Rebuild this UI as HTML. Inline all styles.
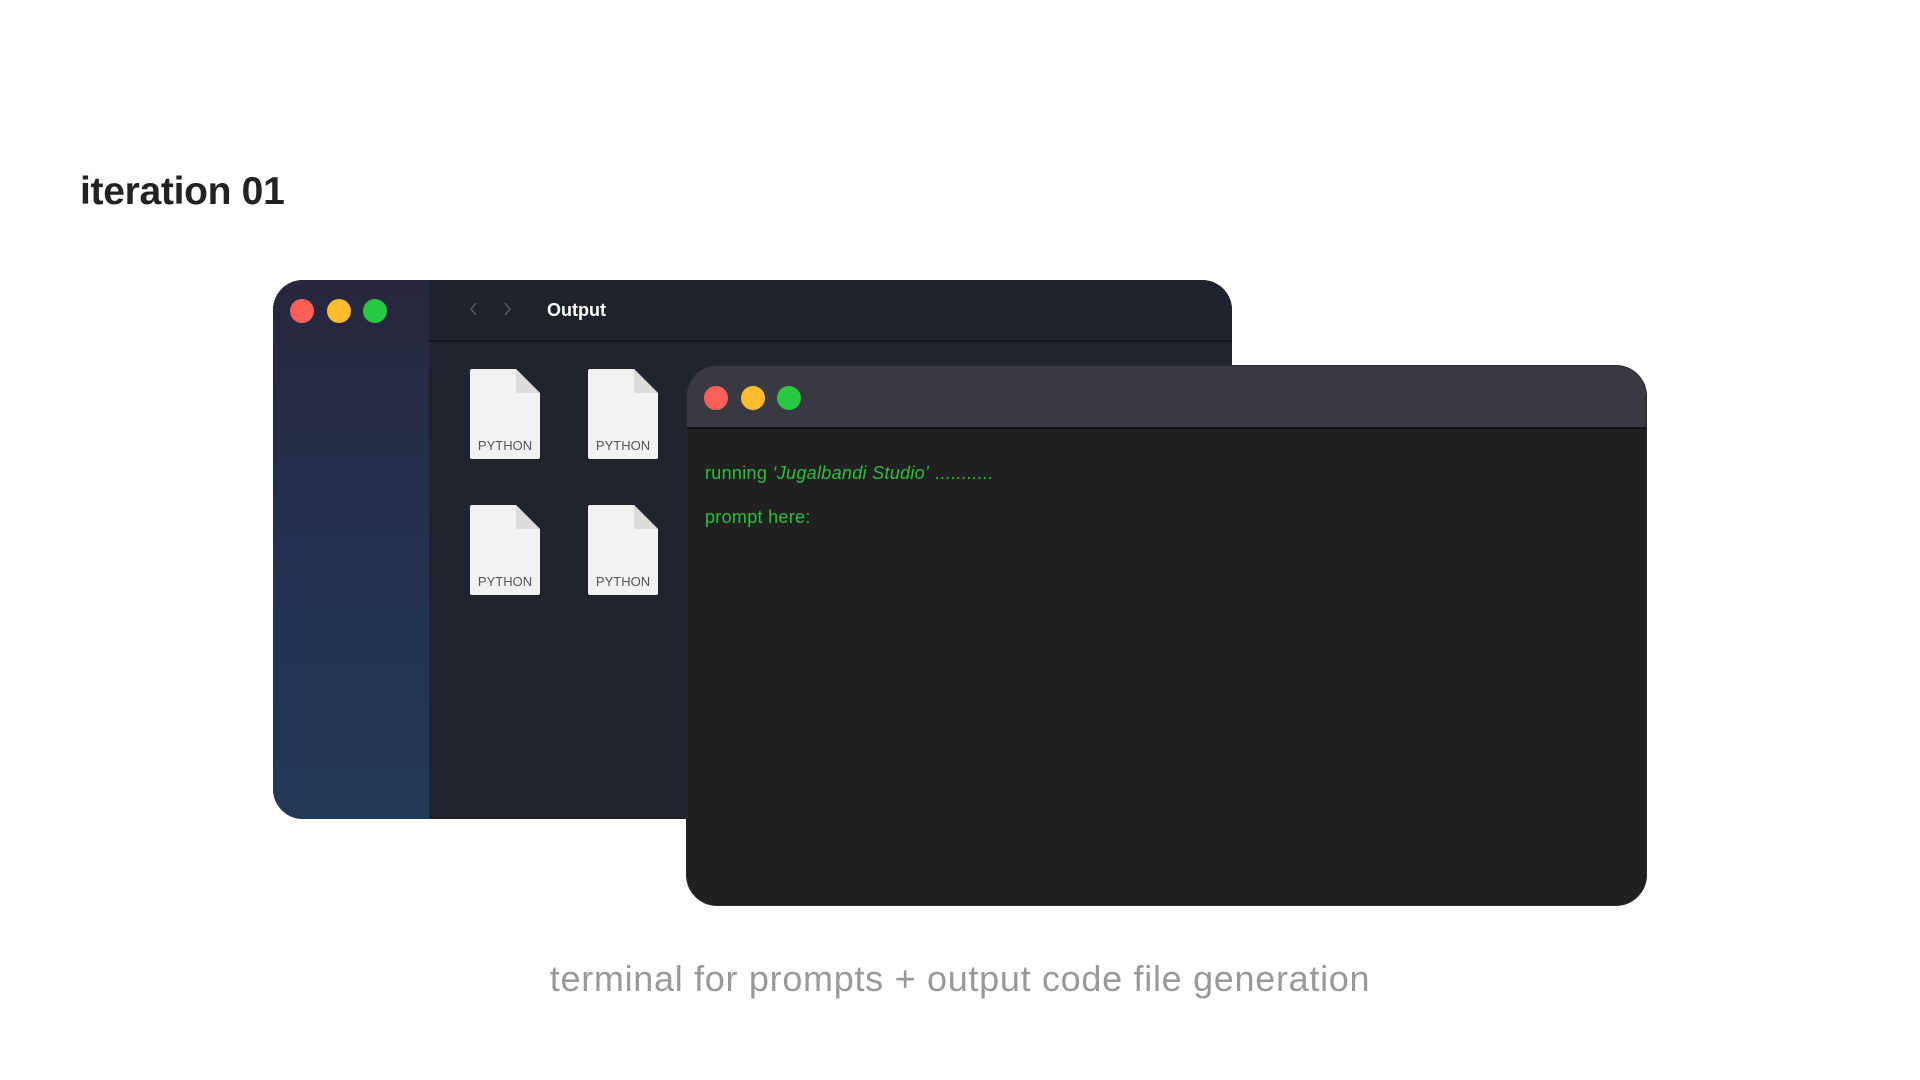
<!DOCTYPE html>
<html><head><meta charset="utf-8"><style>
*{margin:0;padding:0;box-sizing:border-box}
body{width:1920px;height:1080px;background:#fff;position:relative;overflow:hidden;font-family:"Liberation Sans",sans-serif}
.abs{position:absolute}
.title{left:80px;top:170px;font-size:39px;font-weight:bold;color:#222;letter-spacing:-0.3px}
.finder{left:273px;top:280px;width:959px;height:539px;border-radius:30px;overflow:hidden;background:#20232b}
.side{left:0;top:0;width:156px;height:539px;background:linear-gradient(180deg,#27263d 0%,#243150 50%,#213958 100%)}
.fhead{left:156px;top:0;right:0;height:62px;background:#1f222b;border-bottom:2px solid #15171c}
.dot{position:absolute;width:24px;height:24px;border-radius:50%}
.r{background:#fe5f57}.y{background:#febc2e}.g{background:#28c840}
.file{position:absolute;width:70px;height:90px}
.file span{position:absolute;left:0;width:70px;bottom:6px;text-align:center;font-size:13px;color:#555}
.term{left:687px;top:366px;width:959px;height:539px;border-radius:30px;overflow:hidden;background:#202020;box-shadow:0 0 0 1px #2a2a2e}
.thead{left:0;top:0;width:100%;height:63px;background:#393941;border-bottom:2px solid #111}
.green{color:#2bc13a;font-size:18px;letter-spacing:0.3px}
.cap{left:0;width:1920px;top:958px;text-align:center;font-size:36px;color:#999;letter-spacing:0.7px}
</style></head><body>
<div class="abs title">iteration 01</div>

<div class="abs finder">
  <div class="abs side"></div>
  <div class="dot r" style="left:17px;top:19px"></div>
  <div class="dot y" style="left:54px;top:19px"></div>
  <div class="dot g" style="left:90px;top:19px"></div>
  <div class="abs fhead"></div>
  <svg class="abs" style="left:195px;top:20px" width="50" height="20"><path d="M8 3 L3 9 L8 15" stroke="#555a66" stroke-width="1.5" fill="none"/><path d="M37 3 L42 9 L37 15" stroke="#555a66" stroke-width="1.5" fill="none"/></svg>
  <div class="abs" style="left:274px;top:20px;color:#fff;font-weight:bold;font-size:18px">Output</div>
  <div class="file" style="left:197px;top:89px"><svg width="70" height="90"><path d="M2 0 H46 L70 24 V88 Q70 90 68 90 H2 Q0 90 0 88 V2 Q0 0 2 0Z" fill="#f2f2f2"/><path d="M46 0 V22 Q46 24 48 24 H70Z" fill="#dcdcdc"/></svg><span>PYTHON</span></div>
  <div class="file" style="left:315px;top:89px"><svg width="70" height="90"><path d="M2 0 H46 L70 24 V88 Q70 90 68 90 H2 Q0 90 0 88 V2 Q0 0 2 0Z" fill="#f2f2f2"/><path d="M46 0 V22 Q46 24 48 24 H70Z" fill="#dcdcdc"/></svg><span>PYTHON</span></div>
  <div class="file" style="left:197px;top:225px"><svg width="70" height="90"><path d="M2 0 H46 L70 24 V88 Q70 90 68 90 H2 Q0 90 0 88 V2 Q0 0 2 0Z" fill="#f2f2f2"/><path d="M46 0 V22 Q46 24 48 24 H70Z" fill="#dcdcdc"/></svg><span>PYTHON</span></div>
  <div class="file" style="left:315px;top:225px"><svg width="70" height="90"><path d="M2 0 H46 L70 24 V88 Q70 90 68 90 H2 Q0 90 0 88 V2 Q0 0 2 0Z" fill="#f2f2f2"/><path d="M46 0 V22 Q46 24 48 24 H70Z" fill="#dcdcdc"/></svg><span>PYTHON</span></div>
</div>

<div class="abs term">
  <div class="abs thead"></div>
  <div class="dot r" style="left:17px;top:20px"></div>
  <div class="dot y" style="left:54px;top:20px"></div>
  <div class="dot g" style="left:90px;top:20px"></div>
  <div class="abs green" style="left:18px;top:97px">running <i>‘Jugalbandi Studio’</i> ...........</div>
  <div class="abs green" style="left:18px;top:141px">prompt here:</div>
</div>

<div class="abs cap">terminal for prompts + output code file generation</div>
</body></html>
